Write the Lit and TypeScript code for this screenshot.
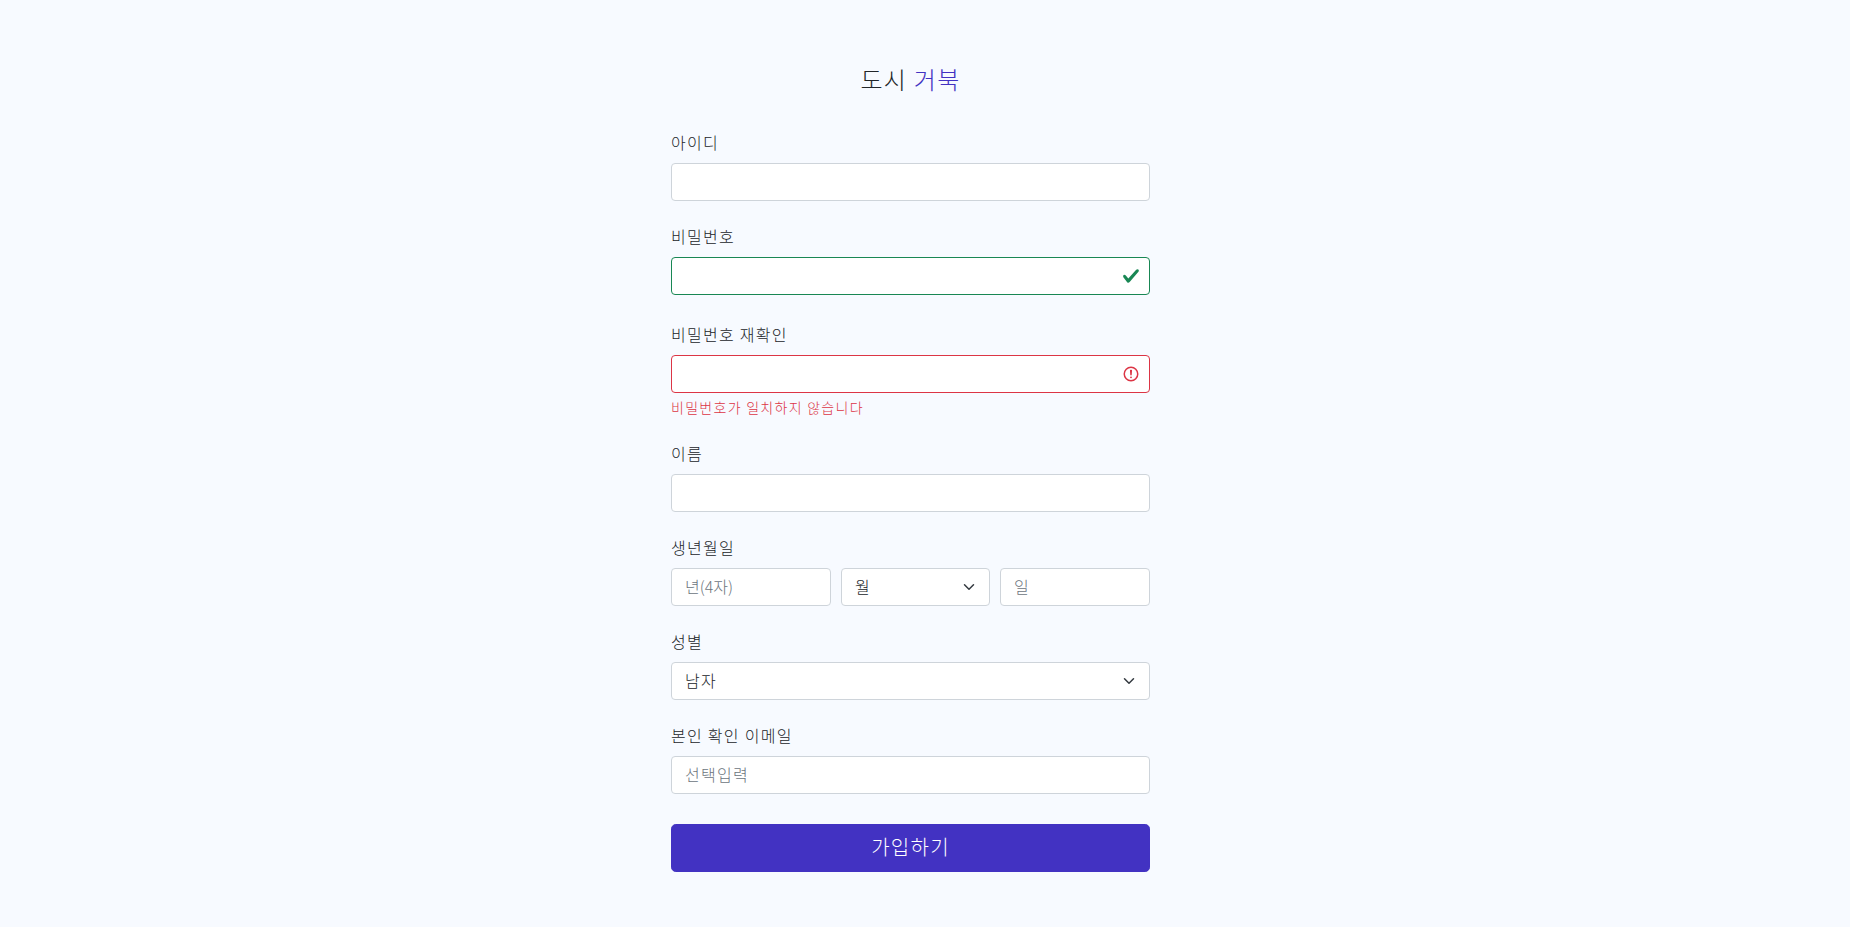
import { LitElement, html, css, svg } from 'lit';
import { customElement } from 'lit/decorators.js';

const checkIcon = svg`<path fill="#198754" d="M2.3 6.73L.6 4.53c-.4-1.04.46-1.4 1.1-.8l1.1 1.4 3.4-3.8c.6-.63 1.6-.27 1.2.7l-4 4.6c-.43.5-.8.4-1.1.1z"/>`;

const alertIcon = svg`
  <circle cx="6" cy="6" r="4.5" fill="none" stroke="#dc3545"/>
  <path fill="none" stroke="#dc3545" stroke-linejoin="round" d="M5.8 3.6h.4L6 6.5z"/>
  <circle cx="6" cy="8.2" r=".6" fill="#dc3545"/>`;

const chevron = svg`<path fill="none" stroke="#343a40" stroke-linecap="round" stroke-linejoin="round" stroke-width="2" d="m2 5 6 6 6-6"/>`;

@customElement('app-root')
export class AppRoot extends LitElement {

  static styles = css`
    :host {
      display: block;
      min-height: 927px;
      background-color: #f7faff;
      color: #212529;
      font-family: "Noto Sans CJK KR", "Noto Sans", sans-serif;
      font-size: 16px;
      font-weight: 300;
      line-height: 24px;
      letter-spacing: 0.08em;
    }

    .page {
      width: 1821px;
      padding: 62px 0 55px;
      box-sizing: border-box;
      display: flex;
      justify-content: center;
    }

    form {
      width: 479px;
      display: flex;
      flex-direction: column;
      gap: 24px;
    }

    h1 {
      margin: 0 0 11px;
      font-size: 24px;
      line-height: 34px;
      font-weight: 300;
      text-align: center;
    }

    h1 span {
      color: #4232c2;
    }

    label {
      display: block;
      line-height: 22px;
      margin-bottom: 10px;
    }

    .control {
      position: relative;
      flex: 1 1 0;
      min-width: 0;
    }

    .control svg {
      position: absolute;
      pointer-events: none;
    }

    input, select {
      display: block;
      width: 100%;
      height: 38px;
      box-sizing: border-box;
      margin: 0;
      padding: 5px 12px 7px 13px;
      border: 1px solid #ced4da;
      border-radius: 4px;
      background: #fff;
      color: #212529;
      font: inherit;
      letter-spacing: inherit;
      outline: none;
      appearance: none;
    }

    input::placeholder {
      color: #6c757d;
      opacity: 1;
    }

    input.short::placeholder {
      letter-spacing: 0;
    }

    input.valid {
      border-color: #198754;
    }

    input.invalid {
      border-color: #dc3545;
    }

    .status {
      top: 10px;
      right: 10px;
      width: 18px;
      height: 18px;
    }

    .arrow {
      top: 13px;
      right: 13px;
      width: 16px;
      height: 12px;
    }

    .feedback {
      margin-top: 4px;
      color: #dc3545;
      font-size: 14px;
      line-height: 21px;
    }

    .birth {
      display: flex;
      gap: 10px;
    }

    .birth .year {
      flex: 0 0 160px;
    }

    .birth .month {
      flex: 0 0 149px;
    }

    button {
      margin-top: 6px;
      height: 48px;
      padding: 0 0 2px;
      border: 1px solid #4232c2;
      border-radius: 4.8px;
      background: #4232c2;
      color: #fff;
      font: inherit;
      font-size: 20px;
      line-height: 30px;
      letter-spacing: inherit;
    }
  `;

  render() {
    return html`
      <div class="page">
        <form @submit=${(e: Event) => e.preventDefault()}>
          <h1>도시 <span>거북</span></h1>

          <div>
            <label for="id">아이디</label>
            <input id="id" type="text" />
          </div>

          <div>
            <label for="pw">비밀번호</label>
            <div class="control">
              <input id="pw" class="valid" type="password" />
              <svg class="status" viewBox="0 0 8 8">${checkIcon}</svg>
            </div>
            <div class="feedback"></div>
          </div>

          <div>
            <label for="pw2">비밀번호 재확인</label>
            <div class="control">
              <input id="pw2" class="invalid" type="password" />
              <svg class="status" viewBox="0 0 12 12">${alertIcon}</svg>
            </div>
            <div class="feedback">비밀번호가 일치하지 않습니다</div>
          </div>

          <div>
            <label for="name">이름</label>
            <input id="name" type="text" />
          </div>

          <div>
            <label for="year">생년월일</label>
            <div class="birth">
              <div class="control year"><input id="year" class="short" type="text" placeholder="년(4자)" /></div>
              <div class="control month">
                <select aria-label="월"><option>월</option></select>
                <svg class="arrow" viewBox="0 0 16 16">${chevron}</svg>
              </div>
              <div class="control"><input type="text" placeholder="일" /></div>
            </div>
          </div>

          <div>
            <label for="gender">성별</label>
            <div class="control">
              <select id="gender"><option>남자</option></select>
              <svg class="arrow" viewBox="0 0 16 16">${chevron}</svg>
            </div>
          </div>

          <div>
            <label for="email">본인 확인 이메일</label>
            <input id="email" type="email" placeholder="선택입력" />
          </div>

          <button type="submit">가입하기</button>
        </form>
      </div>
    `;
  }

}
